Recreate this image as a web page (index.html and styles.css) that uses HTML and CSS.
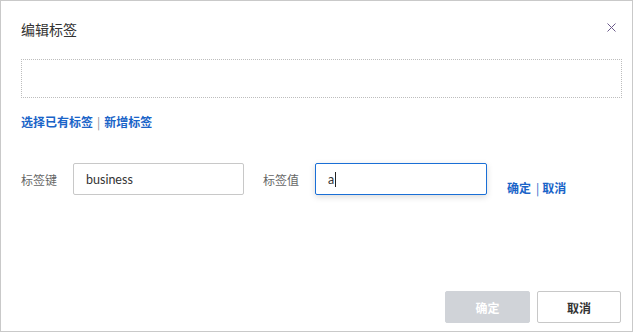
FILE: index.html
```html
<!DOCTYPE html>
<html lang="zh-CN">
<head>
<meta charset="utf-8">
<title>编辑标签</title>
<link rel="stylesheet" href="styles.css">
</head>
<body>
<div class="dialog">
  <div class="header">
    <span class="title">编辑标签</span>
    <span class="close" aria-label="关闭">
      <svg width="9" height="9" viewBox="0 0 9 9"><path d="M0.5 0.5L8.5 8.5M8.5 0.5L0.5 8.5" stroke="#6b5a8a" stroke-width="1" fill="none"/></svg>
    </span>
  </div>
  <div class="tag-box"></div>
  <div class="links">
    <a class="link">选择已有标签</a><span class="sep">|</span><a class="link">新增标签</a>
  </div>
  <div class="form-row">
    <label class="label">标签键</label>
    <div class="input">business</div>
    <label class="label label-2">标签值</label>
    <div class="input input-focus">a<span class="caret"></span></div>
    <div class="row-actions">
      <a class="link">确定</a><span class="sep">|</span><a class="link">取消</a>
    </div>
  </div>
  <div class="footer">
    <button class="btn btn-disabled">确定</button>
    <button class="btn btn-default">取消</button>
  </div>
</div>
</body>
</html>
```
FILE: styles.css
```css
html, body {
  margin: 0;
  padding: 0;
  background: #ffffff;
}
.dialog {
  width: 633px;
  height: 332px;
  box-sizing: border-box;
  border: 1px solid #c9c9c9;
  padding: 0 10px 8px 20px;
  display: flex;
  flex-direction: column;
  font-family: "Noto Sans CJK SC", "Noto Sans", sans-serif;
  color: #333333;
}
.header {
  display: flex;
  justify-content: space-between;
  align-items: center;
  height: 20px;
  margin-top: 18px;
}
.title {
  font-size: 14px;
  line-height: 20px;
  color: #333333;
}
.close {
  display: flex;
  margin-right: 6px;
  margin-top: -3px;
}
.tag-box {
  margin-top: 20px;
  height: 39px;
  box-sizing: border-box;
  border: 1px dotted #bdbdbd;
}
.links {
  margin-top: 16px;
  font-size: 12px;
  line-height: 16px;
  font-weight: bold;
  display: flex;
  align-items: center;
}
.link {
  color: #1a64c8;
  cursor: pointer;
}
.sep {
  color: #8a8f9a;
  font-weight: normal;
  margin: 0 4px;
}
.row-actions .sep {
  color: #1a64c8;
  margin: 0 3px 0 5px;
}
.form-row {
  margin-top: 33px;
  display: flex;
  align-items: center;
  height: 32px;
}
.label {
  font-size: 12px;
  color: #666666;
  margin-right: 16px;
}
.label-2 {
  margin-left: 19px;
}
.input {
  width: 171px;
  height: 32px;
  box-sizing: border-box;
  border: 1px solid #c8c8c8;
  border-radius: 2px;
  padding: 0 12px;
  display: flex;
  align-items: center;
  font-family: "Lato", "Noto Sans", sans-serif;
  font-size: 12.5px;
  color: #333333;
}
.input-focus {
  width: 172px;
  border-color: #1a6fd6;
  box-shadow: 0 2px 6px rgba(0, 0, 0, 0.15);
}
.caret {
  display: inline-block;
  width: 1px;
  height: 15px;
  background: #222222;
  margin-left: 1px;
}
.row-actions {
  align-self: flex-end;
  margin-left: 20px;
  margin-bottom: 1px;
  font-size: 12px;
  line-height: 12px;
  font-weight: bold;
  display: flex;
}
.footer {
  margin-top: auto;
  display: flex;
  justify-content: flex-end;
  gap: 7px;
  margin-right: 1px;
}
.btn {
  height: 32px;
  box-sizing: border-box;
  font-family: "Noto Sans CJK SC", sans-serif;
  font-size: 12px;
  font-weight: bold;
  border-radius: 2px;
  padding: 0;
}
.btn-disabled {
  width: 85px;
  background: #d0d3d8;
  color: #ffffff;
  border: 1px solid #d0d3d8;
}
.btn-default {
  width: 84px;
  background: #ffffff;
  color: #333333;
  border: 1px solid #c8c8c8;
}
```
